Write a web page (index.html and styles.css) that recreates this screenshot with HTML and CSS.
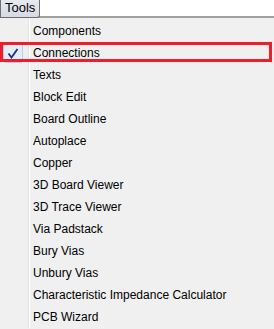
FILE: index.html
```html
<!DOCTYPE html>
<html lang="en">
<head>
    <meta charset="UTF-8">
    <title>Tools menu</title>
    <link rel="stylesheet" href="styles.css">
</head>
<body>
    <div class="menubar">
        <span class="menu-title">Tools</span>
    </div>
    <ul class="menu">
        <li class="menu-item">Components</li>
        <li class="menu-item checked highlight">
            <span class="check">
                <svg width="12" height="11" viewBox="0 0 12 11"><path d="M1.5 5.5 L4.5 9.5 L10.5 1" fill="none" stroke="#1c2b8f" stroke-width="1.8"/></svg>
            </span>
            Connections
        </li>
        <li class="menu-item">Texts</li>
        <li class="menu-item">Block Edit</li>
        <li class="menu-item">Board Outline</li>
        <li class="menu-item">Autoplace</li>
        <li class="menu-item">Copper</li>
        <li class="menu-item">3D Board Viewer</li>
        <li class="menu-item">3D Trace Viewer</li>
        <li class="menu-item">Via Padstack</li>
        <li class="menu-item">Bury Vias</li>
        <li class="menu-item">Unbury Vias</li>
        <li class="menu-item">Characteristic Impedance Calculator</li>
        <li class="menu-item">PCB Wizard</li>
    </ul>
</body>
</html>
```
FILE: styles.css
```css
body {
    margin: 0;
    font-family: 'Liberation Sans', Arial, sans-serif;
    font-size: 12px;
    color: #000;
    background-color: #f0f0f0;
    overflow: hidden;
}
.menubar {
    height: 18px;
    background-color: #fff;
    border-bottom: 2px solid #a0a0a0;
    box-sizing: border-box;
}
.menu-title {
    display: inline-block;
    box-sizing: border-box;
    width: 40px;
    height: 18px;
    padding: 1px 0 0 4px;
    font-size: 13px;
    line-height: 14px;
    border: 1px solid #6e6e6e;
    border-top: none;
    border-radius: 0 0 3px 0;
    background: linear-gradient(#e8eaf0, #d6dae6);
}
.menu {
    list-style: none;
    margin: 0;
    padding: 2px 0 0;
    background: linear-gradient(to right, #f0f0f0 28px, #e2e3e3 28px, #e2e3e3 29px, #fff 29px, #fff 30px, #f0f0f0 30px);
}
.menu-item {
    position: relative;
    height: 22px;
    line-height: 22px;
    padding-left: 33px;
    white-space: nowrap;
}
.check {
    position: absolute;
    left: 3px;
    top: 1px;
    width: 18px;
    height: 18px;
    border: 1px solid #aecff7;
    border-radius: 2px;
    background-color: #e4eefb;
    display: flex;
    align-items: center;
    justify-content: center;
}
.highlight::after {
    content: '';
    position: absolute;
    left: 0;
    top: 0;
    width: 272px;
    height: 20px;
    border: 3px solid #ee1d27;
    box-sizing: border-box;
}
```
